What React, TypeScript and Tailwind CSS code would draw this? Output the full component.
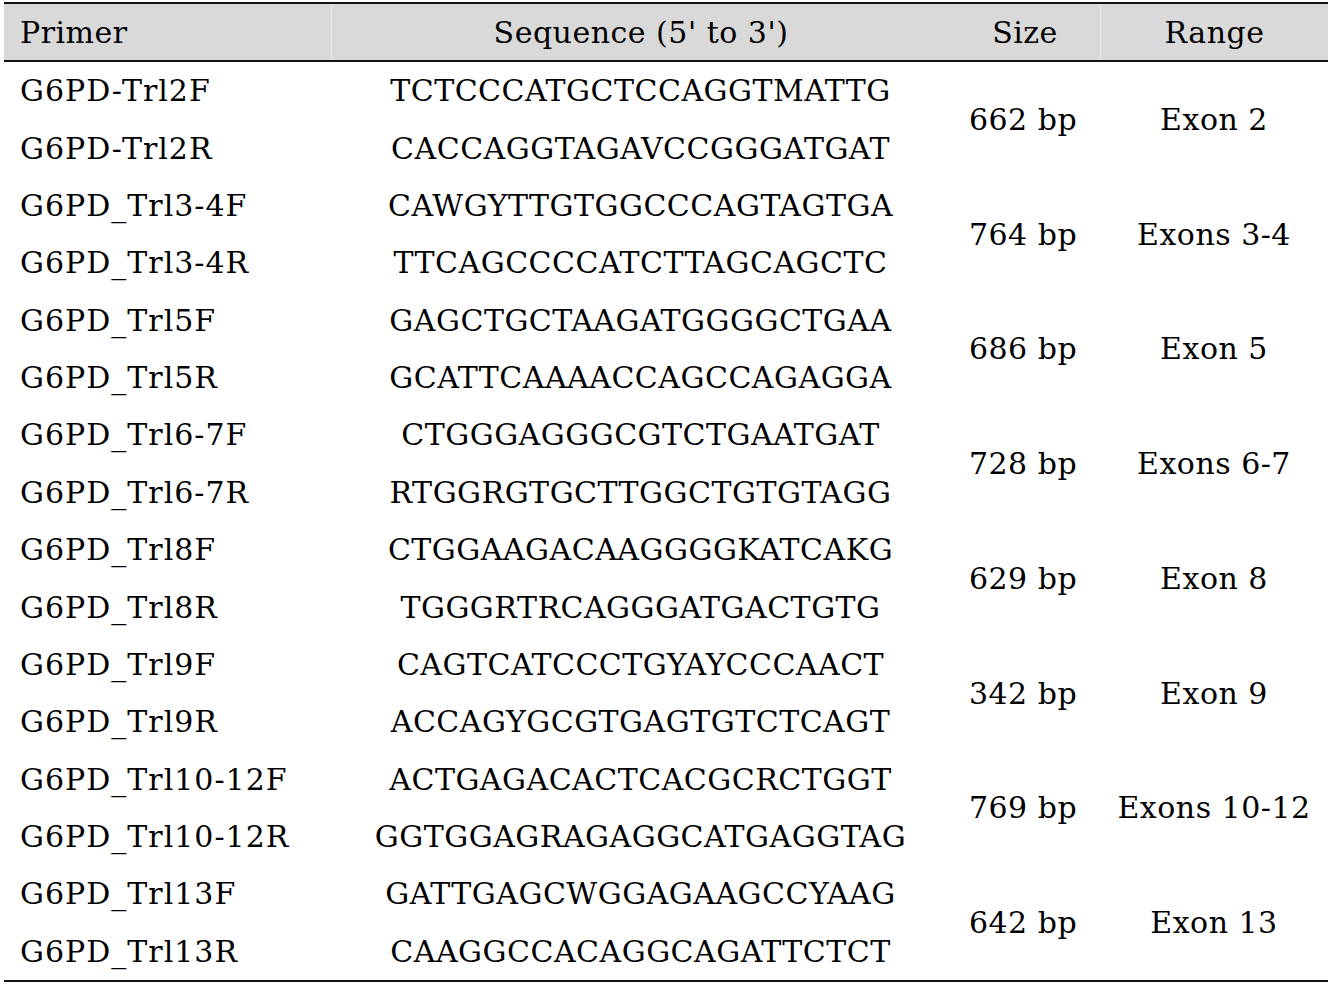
const rows = [
  { pair: ["G6PD-Trl2F", "G6PD-Trl2R"], seq: ["TCTCCCATGCTCCAGGTMATTG", "CACCAGGTAGAVCCGGGATGAT"], size: "662 bp", range: "Exon 2" },
  { pair: ["G6PD_Trl3-4F", "G6PD_Trl3-4R"], seq: ["CAWGYTTGTGGCCCAGTAGTGA", "TTCAGCCCCATCTTAGCAGCTC"], size: "764 bp", range: "Exons 3-4" },
  { pair: ["G6PD_Trl5F", "G6PD_Trl5R"], seq: ["GAGCTGCTAAGATGGGGCTGAA", "GCATTCAAAACCAGCCAGAGGA"], size: "686 bp", range: "Exon 5" },
  { pair: ["G6PD_Trl6-7F", "G6PD_Trl6-7R"], seq: ["CTGGGAGGGCGTCTGAATGAT", "RTGGRGTGCTTGGCTGTGTAGG"], size: "728 bp", range: "Exons 6-7" },
  { pair: ["G6PD_Trl8F", "G6PD_Trl8R"], seq: ["CTGGAAGACAAGGGGKATCAKG", "TGGGRTRCAGGGATGACTGTG"], size: "629 bp", range: "Exon 8" },
  { pair: ["G6PD_Trl9F", "G6PD_Trl9R"], seq: ["CAGTCATCCCTGYAYCCCAACT", "ACCAGYGCGTGAGTGTCTCAGT"], size: "342 bp", range: "Exon 9" },
  { pair: ["G6PD_Trl10-12F", "G6PD_Trl10-12R"], seq: ["ACTGAGACACTCACGCRCTGGT", "GGTGGAGRAGAGGCATGAGGTAG"], size: "769 bp", range: "Exons 10-12" },
  { pair: ["G6PD_Trl13F", "G6PD_Trl13R"], seq: ["GATTGAGCWGGAGAAGCCYAAG", "CAAGGCCACAGGCAGATTCTCT"], size: "642 bp", range: "Exon 13" },
];

export default function App() {
  return (
    <div className="w-[1332px] h-[987px] bg-white pt-[2px] px-[4px] text-black font-['DejaVu_Serif',serif] text-[30px] tracking-[0.5px]">
      <div className="border-t-2 border-b-2 border-[#111]">
        {/* Header */}
        <div className="grid grid-cols-[327px_619px_150px_228px] h-[58px] bg-[#d9d9d9] border-b-2 border-[#111] items-center">
          <div className="pl-[16px]">Primer</div>
          <div className="text-center border-l border-[#e6e6e6] h-full flex items-center justify-center">Sequence (5' to 3')</div>
          <div className="text-center h-full flex items-center justify-center">Size</div>
          <div className="text-center border-l border-[#e6e6e6] h-full flex items-center justify-center">Range</div>
        </div>
        {/* Body */}
        <div className="grid grid-cols-[327px_619px_150px_228px] auto-rows-[57.375px]">
          {rows.map((r) => (
            <div key={r.size} className="contents">
              <div className="pl-[16px] flex items-center tracking-[1px]">{r.pair[0]}</div>
              <div className="flex items-center justify-center">{r.seq[0]}</div>
              <div className="row-span-2 flex items-center justify-center pr-[4px]">{r.size}</div>
              <div className="row-span-2 flex items-center justify-center">{r.range}</div>
              <div className="pl-[16px] flex items-center tracking-[1px]">{r.pair[1]}</div>
              <div className="flex items-center justify-center">{r.seq[1]}</div>
            </div>
          ))}
        </div>
      </div>
    </div>
  );
}
